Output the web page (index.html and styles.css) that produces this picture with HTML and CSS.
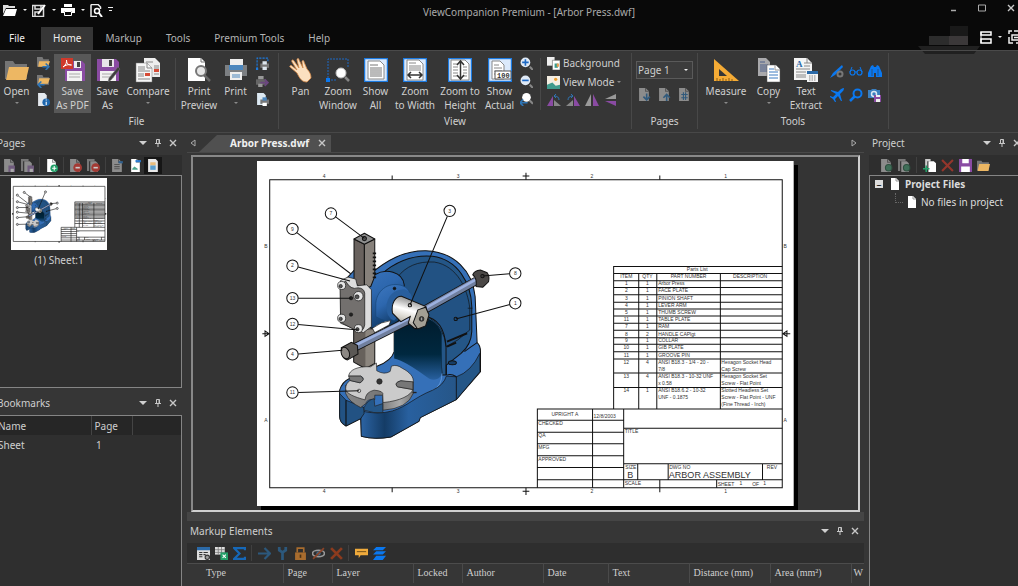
FILE: index.html
```html
<!DOCTYPE html>
<html lang="en">
<head>
    <meta charset="UTF-8">
    <meta name="viewport" content="width=device-width, initial-scale=1.0">
    <title>ViewCompanion Premium - [Arbor Press.dwf]</title>
    <link rel="stylesheet" href="styles.css">
</head>
<body>

<!-- Shared icons -->
<svg class="defs" aria-hidden="true">
    <symbol id="i-close" viewBox="0 0 8 8"><path d="M1 1l6 6M7 1L1 7" stroke="#c8c8c8" stroke-width="1.4"/></symbol>
    <symbol id="i-pin" viewBox="0 0 8 8"><path d="M2.5 .5h3v4h-3zM1 4.5h6M4 4.5V8M5 .5v4" stroke="#c8c8c8" fill="none"/></symbol>
    <symbol id="i-page" viewBox="0 0 12 12"><path d="M2 0h5l3 3v9H2z" fill="#fff"/><path d="M7 0v3h3" fill="none" stroke="#999"/></symbol>
    <symbol id="i-greypage" viewBox="0 0 12 12"><path d="M1 0h6l3 3v9H1z" fill="#8c8c8c"/><path d="M7 0v3h3" fill="none" stroke="#555"/></symbol>
    <symbol id="i-greypages" viewBox="0 0 12 12"><path d="M0 0h7v2H2v9H0z" fill="#777"/><path d="M3 2h5l2 2v8H3z" fill="#8c8c8c"/></symbol>
    <symbol id="i-folder" viewBox="0 0 24 24"><path d="M0 3h8l2 3h12v15H0z" fill="#757575"/><path d="M4 9h20l-3 13H1z" fill="#edb763"/></symbol>
    <symbol id="i-doc" viewBox="0 0 24 24"><path d="M0 0h24v24H0z" fill="#dceafb"/><path d="M.5 .5h23v23H.5z" fill="none" stroke="#1c7ae0" stroke-width="1.5"/></symbol>
    <symbol id="i-floppy" viewBox="0 0 24 24"><path d="M1 1h19l3 3v19H1z" fill="#8a4ba3"/><path d="M6 1h12v8H6z" fill="#e8e4ea"/><path d="M13 2h3v6h-3z" fill="#444"/><path d="M4 13h16v10H4z" fill="#f2f2f2"/><path d="M6 16h12M6 19h12" stroke="#aaa"/></symbol>
    <symbol id="i-printer" viewBox="0 0 24 24"><path d="M6 1h13v9H6z" fill="#eee"/><path d="M1 7h22v11H1z" fill="#7c7f82"/><path d="M5 7h14v5H5z" fill="#4b86bd"/><path d="M6 14h12v8H6z" fill="#eee"/><path d="M8 17h8M8 19h8" stroke="#4b86bd"/></symbol>
</svg>

<header class="titlebar">
    <div class="quick">
        <button aria-label="Open"><svg width="14" height="12" viewBox="0 0 14 12"><path d="M0 1h5l1 1h6v2H3L0 10z" fill="#ddd"/><path d="M3 5h11l-2 7H0z" fill="#fff"/></svg></button>
        <button class="caret white" aria-label="Open menu"></button>
        <button aria-label="Save as"><svg width="14" height="13" viewBox="0 0 14 13"><path d="M.5 1.5h11v11H.5zM3 1v4h6V1M3 12V8h5" fill="none" stroke="#ddd" stroke-width="1.5"/><path d="M13 1L6 10" stroke="#fff" stroke-width="2"/></svg></button>
        <button class="caret white" aria-label="Save menu"></button>
        <button aria-label="Print"><svg width="14" height="12" viewBox="0 0 14 12"><path d="M3 0h8v3H3zM0 4h14v5h-3V7H3v2H0z" fill="#fff"/><path d="M3.500 7.500h7v4h-7z" fill="none" stroke="#fff"/></svg></button>
        <button class="caret white" aria-label="Print menu"></button>
        <button aria-label="Print preview"><svg width="13" height="13" viewBox="0 0 13 13"><path d="M1 .5h7l2.500 2.500v2M1 .5v12h6" fill="none" stroke="#eee" stroke-width="1.500"/><circle cx="7" cy="7" r="2.500" fill="none" stroke="#fff" stroke-width="1.500"/><path d="M9 9l3 4" stroke="#fff" stroke-width="2"/></svg></button>
        <button class="caret white bar" aria-label="Customize"></button>
    </div>
    <h1>ViewCompanion Premium - [Arbor Press.dwf]</h1>
    <div class="window-buttons">
        <button aria-label="Minimize"><svg width="8" height="8"><path d="M2 6.500h5" stroke="#aaa" stroke-width="1.500"/></svg></button>
        <button aria-label="Maximize"><svg width="8" height="8"><path d="M.5 1h7v6h-7z" fill="none" stroke="#aaa"/></svg></button>
        <button aria-label="Close"><svg width="8" height="8"><use href="#i-close"/></svg></button>
    </div>
</header>

<nav class="tabs">
    <a href="#file" class="file">File</a>
    <a href="#home" class="active">Home</a>
    <a href="#markup">Markup</a>
    <a href="#tools">Tools</a>
    <a href="#premium">Premium Tools</a>
    <a href="#help">Help</a>
    <div class="account">
        <svg width="62" height="29" viewBox="0 0 62 29" aria-hidden="true"><path d="M32 0h18v10H32z" fill="#191919"/><path d="M11 10h20v9H11z" fill="#2c2c2c"/><path d="M31 10h19v9H31z" fill="#3b3839"/><path d="M0 20h62l-6 8H7z" fill="#202020"/></svg>
        <button aria-label="Layout"><svg width="12" height="13"><path d="M1 1h10v3H1zM1 8h10v4H1z" fill="none" stroke="#fff" stroke-width="1.500"/><path d="M1 1v11" stroke="#fff"/></svg></button>
        <button class="caret white" aria-label="Layout menu"></button>
        <button aria-label="Full screen"><svg width="13" height="14"><path d="M1 4V1h3M6 1h7M1 7v6h4M4 5h9v5H4zM6 7.500h6M8 13h5" fill="none" stroke="#eee" stroke-width="1.500"/></svg></button>
    </div>
</nav>

<section class="ribbon">
    <div class="group">
        <div class="tools">
            <button class="big-button w33"><svg><use href="#i-folder"/></svg><span>Open</span><i class="caret"></i></button>
            <div class="stack">
                <button aria-label="Import"><svg viewBox="0 0 12 12"><path d="M0 0h5l1 2h5v7H0z" fill="#777"/><path d="M2 4h10l-2 5H1z" fill="#edb763"/><path d="M5 9h6M8 6l3 3-3 3" fill="none" stroke="#2f75b5" stroke-width="1.500"/></svg></button>
                <button aria-label="Export"><svg viewBox="0 0 12 12"><path d="M0 0h5l1 2h5v7H0z" fill="#777"/><path d="M2 3h10l-2 5H1z" fill="#edb763"/><path d="M1 9h6M4 6L1 9l3 3" fill="none" stroke="#2f75b5" stroke-width="1.500"/></svg></button>
                <button aria-label="File info"><svg viewBox="0 0 12 12"><path d="M1 0h6l2 2v10H1z" fill="#e4e9ee"/><circle cx="8.500" cy="8.500" r="3.500" fill="#1e67ae"/><path d="M8.500 6v1M8.500 8v3" stroke="#fff"/></svg></button>
            </div>
            <button class="big-button w37 selected"><svg viewBox="0 0 24 24"><path d="M4 3h17l3 3v17H4z" fill="#8a4ba3"/><path d="M13 3h7v7h-7z" fill="#eee"/><path d="M16 4h3v5h-3z" fill="#444"/><path d="M6 13h15v10H6z" fill="#f2f2f2"/><path d="M8 16h11M8 19h11" stroke="#aaa"/><path d="M0 0h12v11H0z" fill="#d0392b"/><path d="M2 9c3-2 4-5 3.500-7 0 4 2 5 5 5-3-1-6 0-8.500 2z" fill="none" stroke="#fff"/></svg><span>Save<br>As PDF</span></button>
            <button class="big-button w33"><svg viewBox="0 0 24 24"><use href="#i-floppy"/><path d="M22 9L13 20l-1 4 3-2 9-11z" fill="#3f3f3f" stroke="#777" stroke-width=".5"/></svg><span>Save<br>As</span></button>
            <button class="big-button w48"><svg viewBox="0 0 24 24"><path d="M8 0h11l5 5v14H8z" fill="#eee"/><path d="M10 4h7M18 8h5M18 10h5M18 16h5" stroke="#888"/><path d="M18 11h5v3h-5z" fill="#d64b36"/><path d="M0 5h11l5 5v14H0z" fill="#f6f6f6" stroke="#777" stroke-width=".5"/><path d="M11 5v5h5" fill="none" stroke="#888"/><path d="M2 9h7M2 11h7M2 13h12M2 16h6M2 18h6M2 21h12" stroke="#888"/><path d="M9 15h5v3H9z" fill="#d64b36"/></svg><span>Compare</span><i class="caret"></i></button>
            <span class="divider"></span>
            <button class="big-button w40"><svg viewBox="0 0 24 24"><path d="M1 0h13l4 4v19H1z" fill="#fff"/><path d="M14 0v4h4" fill="none" stroke="#777"/><circle cx="14" cy="13" r="5" fill="#e6e6e6" stroke="#777" stroke-width="2"/><path d="M17 17l6 6" stroke="#666" stroke-width="2.500"/></svg><span>Print<br>Preview</span></button>
            <button class="big-button w33"><svg><use href="#i-printer"/></svg><span>Print</span><i class="caret"></i></button>
            <div class="stack">
                <button aria-label="Print window"><svg viewBox="0 0 12 12"><path d="M1 11V1h10v3" fill="none" stroke="#1c7ae0" stroke-dasharray="2 1"/><path d="M0 10h2v2H0z" fill="#1c7ae0"/><path d="M4 6h8v4H4z" fill="#777"/><path d="M6 4h4v3H6zM6 9h4v3H6z" fill="#dde6ee"/></svg></button>
                <button aria-label="Batch print"><svg viewBox="0 0 12 12"><path d="M0 4h9v5H0z" fill="#666"/><path d="M2 1h5v3H2zM2 8h4v3H2z" fill="#999"/><path d="M4 7h7M8 4l3 3-3 3" fill="none" stroke="#6b4680" stroke-width="1.500"/></svg></button>
                <button aria-label="Print page"><svg viewBox="0 0 12 12"><path d="M1 0h6l2 2v9H1z" fill="#dce9f2"/><path d="M4 6h8v4H4z" fill="#777"/><path d="M6 4h4v3H6z" fill="#4b86bd"/><path d="M6 9h4v3H6z" fill="#fff"/></svg></button>
            </div>
        </div>
        <h2>File</h2>
    </div>

    <div class="group">
        <div class="tools">
            <button class="big-button w35"><svg viewBox="0 0 24 24"><path d="M8 15L1 9c-1-1 1-2 2-1l5 4L3 4c-1-2 1-3 2-1l5 7L8 2c0-2 2-2 2 0l4 8-1-6c0-2 2-2 2 0l3 7c3 3 4 6 4 9l-4 4c-5 0-7-3-10-9z" fill="#fbe0c0" stroke="#d88a48" stroke-width=".8"/></svg><span>Pan</span></button>
            <button class="big-button w40"><svg viewBox="0 0 24 24"><path d="M2 20V1h20v9M2 22h8" fill="none" stroke="#1c68c4" stroke-dasharray="2 1"/><path d="M0 20h4v4H0z" fill="#0a78f0"/><circle cx="15" cy="15" r="5" fill="#fff" stroke="#bbb"/><path d="M19 19l4 4" stroke="#888" stroke-width="2.500"/></svg><span>Zoom<br>Window</span></button>
            <button class="big-button w35"><svg viewBox="0 0 24 24"><use href="#i-doc"/><path d="M4 3h12l4 4v14H4z" fill="#fff" stroke="#888"/><path d="M6 7h8M6 10h12M6 12h12M6 14h12M6 16h12M6 18h12" stroke="#777"/></svg><span>Show<br>All</span></button>
            <button class="big-button w44"><svg viewBox="0 0 24 24"><use href="#i-doc"/><path d="M4 2h12l4 4v16H4z" fill="#fff" stroke="#888"/><path d="M6 5h7M6 8h12M6 10h12M6 12h12" stroke="#888"/><path d="M5 17h14M8 14l-3 3 3 3M16 14l3 3-3 3" fill="none" stroke="#333" stroke-width="1.500"/></svg><span>Zoom<br>to Width</span></button>
            <button class="big-button w46"><svg viewBox="0 0 24 24"><use href="#i-doc"/><path d="M3 2h14l4 4v16H3z" fill="#fff" stroke="#888"/><path d="M5 6h5M5 9h5M5 12h5M5 15h5M5 18h5M15 9h4M15 12h4M15 15h4M15 18h4" stroke="#888"/><path d="M12.500 4v16M9 7l3.500-4 3.500 4M9 17l3.500 4 3.500-4" fill="none" stroke="#333" stroke-width="1.500"/></svg><span>Zoom to<br>Height</span></button>
            <button class="big-button w33"><svg viewBox="0 0 24 24"><use href="#i-doc"/><path d="M4 3h8l4 4v14H4z" fill="#fff" stroke="#888"/><path d="M6 7h5M6 10h8M6 13h8M6 16h8" stroke="#888"/><path d="M7 13h16v8H7z" fill="#fff" stroke="#555"/><text x="9" y="20" font-size="7" font-weight="bold" fill="#333" font-family="Liberation Mono, monospace">100</text></svg><span>Show<br>Actual</span></button>
            <div class="stack">
                <button aria-label="Zoom in"><svg viewBox="0 0 12 12"><circle cx="5" cy="5" r="4.500" fill="#dfe9f5"/><path d="M5 2v6M2 5h6" stroke="#1c68c4" stroke-width="1.500"/><path d="M9 9l3 3" stroke="#888" stroke-width="2"/></svg></button>
                <button aria-label="Zoom out"><svg viewBox="0 0 12 12"><circle cx="5" cy="5" r="4.500" fill="#dfe9f5"/><path d="M2 5h6" stroke="#1c68c4" stroke-width="1.500"/><path d="M9 9l3 3" stroke="#888" stroke-width="2"/></svg></button>
                <button aria-label="Previous zoom"><svg viewBox="0 0 12 12"><circle cx="6" cy="4" r="4" fill="#fff"/><path d="M9 7l3 3" stroke="#888" stroke-width="2"/><path d="M0 9h7M3 6L0 9l3 3" fill="none" stroke="#2f75b5" stroke-width="1.500"/></svg></button>
            </div>
            <span class="divider"></span>
            <div class="modes">
                <button><svg viewBox="0 0 12 12"><path d="M0 0h7v8H0z" fill="#eee"/><path d="M5 3h7v9H5z" fill="#fff" stroke="#555" stroke-width=".5"/><path d="M7 6h3v4H7z" fill="#3a9c90"/><path d="M9 6h2v3H9z" fill="#e89b4c"/></svg>Background</button>
                <button><svg viewBox="0 0 12 12"><path d="M0 0h12v12H0z" fill="#f4eee2"/><path d="M0 8l5-2 3 3 4-1v4H0z" fill="#3f9a8c"/><circle cx="8" cy="3" r="1.500" fill="#f0a030"/></svg>View Mode<i class="caret"></i></button>
                <div class="flips">
                    <button aria-label="Rotate left"><svg viewBox="0 0 14 12"><path d="M6 2v10H0z" fill="#8a4ba3"/><path d="M7 6l7 6H7z" fill="#888"/><path d="M12 6q0-4-5-4M9 0L7 2l2 2" fill="none" stroke="#2f75b5"/></svg></button>
                    <button aria-label="Rotate right"><svg viewBox="0 0 14 12"><path d="M7 6v6H0z" fill="#888"/><path d="M8 2l6 10H8z" fill="#8a4ba3"/><path d="M2 6q0-4 5-4M5 0l2 2-2 2" fill="none" stroke="#2f75b5"/></svg></button>
                    <button aria-label="Flip horizontal"><svg viewBox="0 0 14 12"><path d="M6 0v12H0z" fill="#999"/><path d="M8 0l6 12H8z" fill="#8a4ba3"/></svg></button>
                    <button aria-label="Flip vertical"><svg viewBox="0 0 14 12"><path d="M12 0v5H1z" fill="#999"/><path d="M1 7h11v5z" fill="#8a4ba3"/></svg></button>
                </div>
            </div>
        </div>
        <h2>View</h2>
    </div>

    <div class="group">
        <div class="tools pages-tools">
            <label class="select-box"><select aria-label="Page"><option>Page 1</option></select><i class="caret white"></i></label>
            <div class="page-buttons">
                <button aria-label="Next page"><svg viewBox="0 0 12 12"><use href="#i-greypage"/><path d="M8 5v6M5 8l3 3 3-3" fill="none" stroke="#315a7c" stroke-width="1.500"/></svg></button>
                <button aria-label="Previous page"><svg viewBox="0 0 12 12"><use href="#i-greypage"/><path d="M8 12V6M5 9l3-3 3 3" fill="none" stroke="#315a7c" stroke-width="1.500"/></svg></button>
                <button aria-label="Go to page"><svg viewBox="0 0 12 12"><use href="#i-greypage"/><path d="M3 6h6M3 9h6M5 4v7M7 4v7" stroke="#315a7c"/></svg></button>
            </div>
        </div>
        <h2>Pages</h2>
    </div>

    <div class="group">
        <div class="tools">
            <button class="big-button w48"><svg viewBox="0 0 24 24"><path d="M0 1l25 22H0z" fill="#f5ab35"/><path d="M5 11l8 7H5z" fill="#363636"/><path d="M3 20v3M6 21v2M9 20v3M12 21v2M15 20v3M18 21v2" stroke="#8a5c14"/></svg><span>Measure</span><i class="caret"></i></button>
            <button class="big-button w37"><svg viewBox="0 0 24 24"><path d="M1 0h8l4 4v14H1z" fill="#a9a9ac"/><path d="M3 4h5M3 7h8M3 9h8M3 11h8M3 13h8" stroke="#4c5f88"/><path d="M10 7h9l4 4v13H10z" fill="#fff" stroke="#555" stroke-width=".5"/><path d="M18 7v5h5" fill="none" stroke="#999"/><path d="M12 11h5M12 14h9M12 17h9M12 20h9" stroke="#3d7bc0"/></svg><span>Copy</span><i class="caret"></i></button>
            <button class="big-button w38"><svg viewBox="0 0 24 24"><path d="M0 0h13l5 5v17H0z" fill="#f4f4f4"/><path d="M13 0v5h5" fill="none" stroke="#888"/><path d="M10 5h3M10 8h6M2 11h14M2 14h10M2 17h10M2 19h10" stroke="#888"/><text x="2" y="9" font-size="9" font-weight="bold" fill="#2b6aa8" font-family="Liberation Serif, serif">A</text><path d="M13 13h11v11H13z" fill="#f4f4f4"/><path d="M13 13h11v3H13z" fill="#2b6aa8"/><path d="M15 18h7M15 20h7M15 22h7" stroke="#888" stroke-dasharray="1.500 1"/></svg><span>Text<br>Extract</span></button>
            <div class="icon-grid">
                <button aria-label="Edit settings"><svg viewBox="0 0 14 14"><path d="M12 1L3 9l-3 5 5-3 8-8z" fill="#0a78f0"/><circle cx="10" cy="10" r="2.500" fill="none" stroke="#777" stroke-width="2"/></svg></button>
                <button aria-label="Glasses"><svg viewBox="0 0 14 14"><circle cx="3.500" cy="8.500" r="2.500" fill="none" stroke="#0a78f0" stroke-width="1.200"/><circle cx="10.500" cy="8.500" r="2.500" fill="none" stroke="#0a78f0" stroke-width="1.200"/><path d="M1 8l2-5M13 8l-2-5M6 8h2" stroke="#0a78f0"/></svg></button>
                <button aria-label="Find"><svg viewBox="0 0 14 14"><path d="M3 2l2-1 1 2h2l1-2 2 1 3 7v4H8V9H6v4H0V9z" fill="#0a78f0"/><path d="M4 5v7M10 5v7" stroke="#363636" stroke-width=".6"/></svg></button>
                <button aria-label="Fly to"><svg viewBox="0 0 14 14"><path d="M14 0c-2 0-3 1-4 2L8 4 1 2v1l5 3-3 3-3-1v1l3 2 2 3h1l-1-3 3-3 3 5h1l-2-7 2-2c1-1 2-2 2-4z" fill="#0a78f0"/></svg></button>
                <button aria-label="Magnifier"><svg viewBox="0 0 14 14"><circle cx="8.500" cy="5.500" r="4" fill="none" stroke="#0a78f0" stroke-width="2"/><path d="M5.500 8.500L1 13" stroke="#0a78f0" stroke-width="2.500"/></svg></button>
                <button aria-label="Snapshot"><svg viewBox="0 0 14 14"><path d="M0 2h3l1-1h4l1 1h3v8H0z" fill="#3a7fc0"/><circle cx="6" cy="6" r="2.500" fill="none" stroke="#dce8f3" stroke-width="1.500"/><path d="M6 7h7v7H6z" fill="#8a4ba3"/><path d="M8 7h4v2H8zM8 11h4v3H8z" fill="#eee"/></svg></button>
            </div>
        </div>
        <h2>Tools</h2>
    </div>
</section>

<main>
    <aside class="left-dock">
        <section class="dock-panel pages">
            <header class="panel-title"><h3>Pages</h3><button class="caret menu" aria-label="Menu"></button><button aria-label="Pin"><svg><use href="#i-pin"/></svg></button><button aria-label="Close"><svg><use href="#i-close"/></svg></button></header>
            <div class="toolbar">
                <button aria-label="Save page"><svg viewBox="0 0 12 12"><use href="#i-greypage"/><path d="M5 6h6v6H5z" fill="#6f5b7c"/><path d="M7 9h3v3H7z" fill="#aaa"/></svg></button>
                <button aria-label="Save pages"><svg viewBox="0 0 12 12"><use href="#i-greypages"/><path d="M6 6h6v6H6z" fill="#6f5b7c"/><path d="M8 9h3v3H8z" fill="#aaa"/></svg></button>
                <i></i>
                <button aria-label="Add page"><svg viewBox="0 0 12 12"><use href="#i-page"/><circle cx="8.500" cy="8.500" r="3.500" fill="#23a069"/><path d="M8.500 6.500v4M6.500 8.500h4" stroke="#fff"/></svg></button>
                <i></i>
                <button aria-label="Remove page"><svg viewBox="0 0 12 12"><use href="#i-greypage"/><circle cx="8" cy="8" r="4" fill="#a33a34"/><path d="M6 8h4" stroke="#ccc" stroke-width="1.500"/></svg></button>
                <button aria-label="Remove pages"><svg viewBox="0 0 12 12"><use href="#i-greypages"/><circle cx="8" cy="8" r="4" fill="#a33a34"/><path d="M6 8h4" stroke="#ccc" stroke-width="1.500"/></svg></button>
                <i></i>
                <button aria-label="Import page"><svg viewBox="0 0 12 12"><use href="#i-greypage"/><path d="M3 5h5M3 7h5M3 9h5" stroke="#555"/><path d="M7 3h4" stroke="#2f5e8c" stroke-width="2"/></svg></button>
                <button aria-label="Export page"><svg viewBox="0 0 12 12"><use href="#i-page"/><path d="M3 9l2-2 3 2v1H3z" fill="#4ba38e"/><path d="M6 2h5" stroke="#2a7bd0" stroke-width="2"/></svg></button>
                <button class="on" aria-label="Thumbnails"><svg viewBox="0 0 12 12"><path d="M1 0h7l2 2v10H1z" fill="#e8e8e8"/><path d="M3 3h5v3H3z" fill="#e9bd7c"/><path d="M3 6h5v4H3z" fill="#5a9fd0"/></svg></button>
            </div>
            <div class="panel-body thumbs">
                <figure>
                    <div class="thumb"><svg viewBox="0 5 1604 1034" aria-hidden="true"><use href="#drawing"/></svg></div>
                    <figcaption>(1) Sheet:1</figcaption>
                </figure>
            </div>
        </section>
        <section class="dock-panel bookmarks">
            <header class="panel-title"><h3>Bookmarks</h3><button class="caret menu" aria-label="Menu"></button><button aria-label="Pin"><svg><use href="#i-pin"/></svg></button><button aria-label="Close"><svg><use href="#i-close"/></svg></button></header>
            <div class="panel-body">
                <table class="bookmark-table">
                    <thead><tr><th>Name</th><th>Page</th><th></th></tr></thead>
                    <tbody><tr><td>Sheet</td><td>1</td><td></td></tr></tbody>
                </table>
            </div>
        </section>
    </aside>

    <div class="center">
        <div class="doc-tabs">
            <button class="scroll" aria-label="Scroll left"><svg width="6" height="8"><path d="M5 1v6L1 4z" fill="none" stroke="#aaa"/></svg></button>
            <div class="doc-tab"><span>Arbor Press.dwf</span><button aria-label="Close document"><svg><use href="#i-close"/></svg></button></div>
            <button class="scroll right" aria-label="Scroll right"><svg width="6" height="8"><path d="M1 1v6l4-3z" fill="none" stroke="#aaa"/></svg></button>
        </div>
        <div class="canvas">
            <svg class="sheet" viewBox="0 5 1604 1034" role="img" aria-label="Arbor press assembly">
                <defs>
                    <linearGradient id="g-hollow" x1="0" y1="0" x2="0" y2="1"><stop offset="0" stop-color="#001b2c"/><stop offset=".6" stop-color="#00283f"/><stop offset="1" stop-color="#28609f"/></linearGradient>
                    <linearGradient id="g-front"><stop offset="0" stop-color="#2c64a4"/><stop offset=".25" stop-color="#143c66"/><stop offset=".5" stop-color="#28609f"/><stop offset="1" stop-color="#265688"/></linearGradient>
                    <linearGradient id="g-boss" x1="0" y1="0" x2=".6" y2="1"><stop offset="0" stop-color="#3d77bf"/><stop offset=".5" stop-color="#2d67ae"/><stop offset="1" stop-color="#123c6a"/></linearGradient>
                    <linearGradient id="g-steel" x1=".3" y1="0" x2="0" y2="1"><stop offset="0" stop-color="#8c8c8c"/><stop offset=".35" stop-color="#fff"/><stop offset=".6" stop-color="#d5d2ca"/><stop offset="1" stop-color="#6f6c66"/></linearGradient>
                    <linearGradient id="g-rim"><stop offset="0" stop-color="#888"/><stop offset=".5" stop-color="#777"/><stop offset=".8" stop-color="#aaa"/><stop offset="1" stop-color="#777"/></linearGradient>
                </defs>
                <g id="drawing">
                    <path d="M0 5h1604v1034H0z" fill="#fff"/>
                    <g class="ink">
                        <path d="M38 61h1532v921H38z"/>
                        <path d="M404 48v13M1204 48v13M404 982v13M1204 982v13M804 40v21M794 50h20M804 982v21M794 992h20M16 521h22M24 513v16l12-8zM1570 521h24M1584 513v16l-12-8z"/>
                    </g>
                    <g class="sheet-text centered">
                        <text x="201" y="55">4</text><text x="601" y="55">3</text><text x="1001" y="55">2</text><text x="1401" y="55">1</text>
                        <text x="201" y="998">4</text><text x="601" y="998">3</text><text x="1001" y="998">2</text><text x="1401" y="998">1</text>
                        <text x="27" y="265">B</text><text x="27" y="784">A</text><text x="1579" y="265">B</text><text x="1579" y="784">A</text>
                    </g>

                    <!-- Press: frame and base -->
                    <g stroke="#111" stroke-width="3" stroke-linejoin="round">
                        <path fill="#3570b8" d="M335 345C390 300 440 272 505 273C590 276 645 335 652 410L658 548Q668 556 668 575V635L596 718L488 772L484 783L400 830Q350 838 312 828L310 775L266 797Q247 787 247 768V690Q255 665 275 656L360 618Q402 602 410 575V500L340 505Z"/>
                        <path fill="#245687" d="M372 343C420 302 470 285 525 290C600 300 640 370 642 440V515Q640 555 610 580L566 615V645H553L545 520L420 480Z"/>
                        <path fill="#225283" d="M420 352C445 320 480 304 530 307C600 318 630 390 636 445V510L600 540L565 560Q560 500 510 470L440 430Z" stroke-width="2"/>
                        <path fill="url(#g-hollow)" stroke="none" d="M410 495L470 468Q535 470 552 520V644Q540 665 515 656Q440 600 410 595Z"/>
                        <path fill="none" d="M500 468Q560 478 565 560V645"/>
                        <path fill="none" stroke="#5a92d5" d="M553 640Q552 680 525 690"/>
                        <path fill="url(#g-front)" d="M310 752Q360 764 405 752C450 738 470 712 525 690Q558 675 566 648L596 650V718L488 772L484 783L400 830Q350 838 312 828Z" stroke-width="2"/>
                        <path fill="#245687" d="M596 650Q640 635 666 580V635L596 718Z" stroke-width="2"/>
                        <path fill="none" d="M568 645Q580 640 596 650M658 548Q640 560 620 575"/>
                        <path fill="#225283" d="M247 700V768Q247 787 266 797V720ZM266 720L320 742V760L310 775L266 797Z" stroke-width="2"/>
                        <ellipse cx="584" cy="608" rx="12" ry="6" fill="#163d66"/>
                        <path d="M568 545L628 520M568 560L595 548" stroke-width="6"/>
                        <path d="M630 445h14" stroke-width="2"/>
                    </g>
                    <!-- Press: rack column -->
                    <g stroke="#111" stroke-width="3" stroke-linejoin="round">
                        <path fill="#67615c" d="M289 480H352V610L325 626L289 606Z"/><path fill="#8c867f" stroke="none" d="M324 510H350V609L324 623Z"/>
                        <path fill="url(#g-boss)" d="M268 356L290 332L352 345C385 325 435 335 440 375V470L400 500L340 505L320 390Z"/>
                        <path fill="#69625e" d="M290 238L321 253V388L290 370Z"/>
                        <path fill="#87817b" d="M321 253L352 238V350L340 380L321 388Z"/>
                        <path fill="#8e8e8e" d="M290 238L321 221L352 238L321 254Z"/>
                        <path d="M346 281h10M346 293h10M346 305h10M346 317h10M346 329h10M346 341h10M346 353h10" stroke-width="5"/>
                        <circle cx="321" cy="237" r="6" fill="#555"/>
                    </g>
                    <!-- Press: boss, face plate and screws -->
                    <g stroke="#111" stroke-width="2" stroke-linejoin="round">
                        <path fill="url(#g-boss)" stroke="#174678" d="M355 430C360 385 400 365 435 378C458 385 462 410 455 430L420 480Q385 490 355 470Z"/>
                        <path fill="#285e9d" stroke="none" d="M387 435Q395 390 440 388Q465 395 464 425L410 482Q385 475 387 435Z"/>
                        <path fill="#dcdcdc" d="M250 362L272 352L295 358L300 378L328 375L342 390V500L318 518L250 490Z"/>
                        <path fill="#73706e" d="M248 375L265 364Q280 392 302 384Q320 385 322 400V495Q318 518 298 513L250 487Z"/>
                        <g fill="#e5e5e5"><circle cx="253" cy="377" r="12"/><circle cx="303" cy="409" r="14"/><circle cx="253" cy="475" r="12"/><circle cx="303" cy="506" r="12"/></g>
                        <g fill="#555"><circle cx="250" cy="379" r="5"/><circle cx="299" cy="411" r="6"/><circle cx="250" cy="477" r="5"/><circle cx="300" cy="508" r="5"/></g>
                        <circle cx="281" cy="415" r="5" fill="#222"/><circle cx="281" cy="464" r="5" fill="#222"/><circle cx="411" cy="386" r="4" fill="#111"/>
                        <path fill="#fff" d="M345 505Q370 485 400 482L395 495L352 518Z"/>
                    </g>
                    <!-- Press: lever, shaft and handle caps -->
                    <g stroke="#111" stroke-linecap="butt">
                        <path d="M500 450L655 363M290 563L460 478" stroke-width="25"/>
                        <path d="M500 450L655 363M290 563L460 478" stroke="#707f9e" stroke-width="20"/>
                        <path d="M500 447L655 359M290 558L460 473" stroke="#9cb1e0" stroke-width="8"/>
                        <path fill="url(#g-steel)" stroke-width="3" d="M405 460C400 430 415 408 432 409L505 440L512 480L490 505L472 506L452 490L458 470L430 485Z"/>
                        <path fill="#a39f94" stroke-width="3" d="M481 450L504 442L514 465L504 498L480 507L467 488Z"/>
                        <circle cx="492" cy="477" r="7" fill="#444" stroke-width="2"/><path d="M492 473v8" stroke="#ddd" stroke-width="2"/>
                        <path fill="#4b4846" stroke-width="3" d="M645 345Q650 332 668 331L688 339Q696 350 692 366L675 382L655 380Q658 355 645 345Z"/>
                        <path fill="#5b5855" stroke-width="3" d="M252 563L282 547L300 556L302 582L270 600Q250 592 252 563Z"/>
                        <ellipse cx="264" cy="579" rx="12" ry="18" fill="#8c8884" stroke-width="3" transform="rotate(-20 264 579)"/>
                    </g>
                    <!-- Press: table plate -->
                    <g stroke="#222" stroke-width="2" stroke-linejoin="round">
                        <path fill="url(#g-rim)" d="M265 675V700Q275 725 310 742L325 730Q330 715 352 718V705H376V750Q450 745 467 700V665Z"/>
                        <path fill="#cbcbcb" d="M265 685Q265 670 278 661L308 668Q326 655 310 648L274 648C275 630 300 618 340 620L357 609L358 632Q380 645 398 634L402 618Q418 612 435 625C455 635 470 650 467 667L430 662Q408 668 420 680L466 688C460 705 430 722 377 727L376 705Q380 692 350 690Q325 695 323 719C290 710 265 700 265 685Z"/>
                        <path fill="#777" d="M274 648L310 648Q326 658 308 668L278 661ZM466 665L430 662Q408 668 420 680L466 688Z"/>
                        <path fill="#245687" d="M320 742Q330 720 350 715L352 738L376 730V757Q350 760 320 750Z"/>
                        <circle cx="366" cy="664" r="8" fill="#333"/><circle cx="305" cy="692" r="5" fill="#ddd"/><path d="M465 697h12" stroke-width="4"/>
                    </g>

                    <!-- Balloons -->
                    <g class="ink">
                        <path d="M235 172L321 236M119 219L280 342M123 322L278 364M123 415H280M123 494L303 510M123 582L255 571M123 697L305 692M569 170L457 436M755 342L674 349M756 434L594 477"/>
                        <g fill="#fff"><circle cx="221" cy="162" r="17"/><circle cx="106" cy="208" r="17"/><circle cx="106" cy="318" r="17"/><circle cx="106" cy="415" r="17"/><circle cx="106" cy="492" r="17"/><circle cx="106" cy="583" r="17"/><circle cx="106" cy="697" r="17"/><circle cx="576" cy="154" r="17"/><circle cx="772" cy="341" r="17"/><circle cx="772" cy="430" r="17"/></g>
                        <g fill="none"><circle cx="457" cy="436" r="5"/><circle cx="594" cy="477" r="5"/><circle cx="674" cy="349" r="5"/></g>
                    </g>
                    <g class="sheet-text centered">
                        <text x="221" y="167">7</text><text x="106" y="213">9</text><text x="106" y="323">2</text><text x="106" y="420">13</text><text x="106" y="497">12</text><text x="106" y="588">4</text><text x="106" y="702">11</text><text x="576" y="159">3</text><text x="772" y="346">8</text><text x="772" y="435">1</text>
                    </g>

                    <!-- Parts list -->
                    <path class="ink" d="M1066 746V320H1570M1066 341h504M1066 363h504M1066 383h504M1066 405h504M1066 427h504M1066 447h504M1066 468h504M1066 490h504M1066 511h504M1066 533h504M1066 553h504M1066 575h504M1066 597h504M1066 639h504M1066 682h504M1141 341v405M1195 341v405M1385 341v405"/>
                    <g class="sheet-text centered">
                        <text x="1316" y="334">Parts List</text>
                        <text x="1104" y="356">ITEM</text><text x="1167" y="356">QTY</text><text x="1290" y="356">PART NUMBER</text><text x="1474" y="356">DESCRIPTION</text>
                        <text x="1104" y="376">1</text><text x="1167" y="376">1</text><text x="1104" y="398">2</text><text x="1167" y="398">1</text>
                        <text x="1104" y="420">3</text><text x="1167" y="420">1</text><text x="1104" y="442">4</text><text x="1167" y="442">1</text>
                        <text x="1104" y="462">5</text><text x="1167" y="462">1</text><text x="1104" y="483">11</text><text x="1167" y="483">1</text>
                        <text x="1104" y="505">7</text><text x="1167" y="505">1</text><text x="1104" y="527">8</text><text x="1167" y="527">2</text>
                        <text x="1104" y="547">9</text><text x="1167" y="547">1</text><text x="1104" y="568">10</text><text x="1167" y="568">1</text>
                        <text x="1104" y="590">11</text><text x="1167" y="590">1</text><text x="1104" y="611">12</text><text x="1167" y="611">4</text>
                        <text x="1104" y="653">13</text><text x="1167" y="653">4</text><text x="1104" y="696">14</text><text x="1167" y="696">1</text>
                    </g>
                    <g class="sheet-text">
                        <text x="1199" y="376">Arbor Press</text><text x="1199" y="398">FACE PLATE</text><text x="1199" y="420">PINION SHAFT</text><text x="1199" y="442">LEVER ARM</text>
                        <text x="1199" y="462">THUMB SCREW</text><text x="1199" y="483">TABLE PLATE</text><text x="1199" y="505">RAM</text><text x="1199" y="527">HANDLE CAPlgt</text>
                        <text x="1199" y="547">COLLAR</text><text x="1199" y="568">GIB PLATE</text><text x="1199" y="590">GROOVE PIN</text>
                        <text x="1199" y="611">ANSI B18.3 - 1/4 - 20 -</text><text x="1199" y="632">7/8</text><text x="1199" y="653">ANSI B18.3 - 10-32 UNF</text><text x="1199" y="675">x 0.58</text>
                        <text x="1199" y="696">ANSI B18.6.2 - 10-32</text><text x="1199" y="716">UNF - 0.1875</text>
                        <text x="1388" y="611">Hexagon Socket Head</text><text x="1388" y="632">Cap Screw</text><text x="1388" y="653">Hexagon Socket Set</text><text x="1388" y="675">Screw - Flat Point</text>
                        <text x="1388" y="696">Slotted Headless Set</text><text x="1388" y="716">Screw - Flat Point - UNF</text><text x="1388" y="738">(Fine Thread - Inch)</text>
                    </g>
                    <!-- Title block -->
                    <path class="ink" d="M838 982V746H1570M1003 746v236M1096 746v236M838 780h258M838 816h258M838 850h258M838 886h258M838 921h258M838 958h732M1096 804h474M1096 910h474M1138 910v48M1229 910v48M1511 910v48M1204 958v24M1374 958v24"/>
                    <g class="sheet-text">
                        <text x="880" y="768">UPRIGHT A</text><text x="1006" y="774">12/8/2003</text><text x="841" y="794">CHECKED</text><text x="841" y="831">QA</text><text x="841" y="865">MFG</text><text x="841" y="901">APPROVED</text>
                        <text x="1099" y="819">TITLE</text><text x="1101" y="925">SIZE</text><text x="1232" y="925">DWG NO</text><text x="1524" y="925">REV</text><text x="1099" y="972">SCALE</text><text x="1377" y="976">SHEET</text><text x="1442" y="973">1</text><text x="1480" y="976">OF</text><text x="1513" y="973">1</text>
                        <text class="big" x="1107" y="953">B</text><text class="big" x="1231" y="954">ARBOR ASSEMBLY</text>
                    </g>
                </g>
            </svg>
        </div>
        <section class="elements">
            <header class="panel-title"><h3>Markup Elements</h3><button class="caret menu" aria-label="Menu"></button><button aria-label="Pin"><svg><use href="#i-pin"/></svg></button><button aria-label="Close"><svg><use href="#i-close"/></svg></button></header>
            <div class="toolbar">
                <button aria-label="Properties"><svg viewBox="0 0 12 12"><path d="M0 0h12v12H0z" fill="#ddd"/><path d="M0 0h12v3H0z" fill="#2b6aa8"/><path d="M2 5h3M2 7h3M2 9h3M6 5h4M6 7h2" stroke="#333"/><circle cx="9.500" cy="9.500" r="2" fill="#999" stroke="#333"/></svg></button>
                <button aria-label="Export to Excel"><svg viewBox="0 0 12 12"><path d="M0 0h9v7H0z" fill="#ddd"/><path d="M3 0v7M6 0v7M0 2.500h9M0 5h9" stroke="#777" stroke-width=".7"/><path d="M5 5h7v7H5z" fill="#23a069"/><path d="M7 7l3 3M10 7l-3 3" stroke="#fff"/></svg></button>
                <button aria-label="Sum"><svg viewBox="0 0 12 12"><path d="M11 3V1H1l5 5-5 5h10V9" fill="none" stroke="#1668b8" stroke-width="2"/></svg></button>
                <i></i>
                <button aria-label="Go to"><svg viewBox="0 0 12 12"><path d="M0 6h11M6 1l5 5-5 5" fill="none" stroke="#2c587c" stroke-width="2"/></svg></button>
                <button aria-label="Settings"><svg viewBox="0 0 12 12"><path d="M3 0v3l3 2 3-2V0M6 5v7" fill="none" stroke="#2c587c" stroke-width="2.500"/></svg></button>
                <button aria-label="Lock"><svg viewBox="0 0 12 12"><path d="M1 5h10v7H1z" fill="#a86c2e"/><path d="M3 5V1h6v4" fill="none" stroke="#a86c2e" stroke-width="1.500"/><path d="M6 7v3" stroke="#4a3216" stroke-width="1.500"/></svg></button>
                <button aria-label="Hide"><svg viewBox="0 0 12 12"><ellipse cx="6" cy="6" rx="5.500" ry="3" fill="none" stroke="#999" stroke-width="1.500"/><circle cx="6" cy="6" r="2" fill="#456c8c"/><path d="M1 11L11 1" stroke="#8c4428" stroke-width="1.500"/></svg></button>
                <button aria-label="Delete"><svg viewBox="0 0 12 12"><path d="M1 1l10 10M11 1L1 11" stroke="#8c3b1e" stroke-width="2.500"/></svg></button>
                <i></i>
                <button aria-label="Comment"><svg viewBox="0 0 14 12"><path d="M0 1h14v7H6l-2 3V8H0z" fill="#f0ab3c"/><path d="M2 4h10" stroke="#6b4b18"/></svg></button>
                <button aria-label="Layers"><svg viewBox="0 0 12 12"><path d="M3 0h9L9 3H0zM3 4h9L9 7H0zM3 8h9l-3 4H0z" fill="#0a78f0"/></svg></button>
            </div>
            <table class="element-table">
                <thead><tr><th class="c96">Type</th><th class="c49">Page</th><th class="c81">Layer</th><th class="c49">Locked</th><th class="c81">Author</th><th class="c65">Date</th><th class="c81">Text</th><th class="c81">Distance (mm)</th><th class="c81">Area (mm²)</th><th>W</th></tr></thead>
            </table>
        </section>
    </div>

    <aside class="right-dock">
        <header class="panel-title"><h3>Project</h3><button class="caret menu" aria-label="Menu"></button><button aria-label="Pin"><svg><use href="#i-pin"/></svg></button><button aria-label="Close"><svg><use href="#i-close"/></svg></button></header>
        <div class="toolbar">
            <button aria-label="Open project file"><svg viewBox="0 0 12 12"><use href="#i-greypage"/><circle cx="8" cy="8" r="3" fill="#3f6e58" stroke="#2f5040"/></svg></button>
            <button aria-label="Reload"><svg viewBox="0 0 12 12"><use href="#i-greypages"/><circle cx="8" cy="8" r="3" fill="#3f6e58" stroke="#2f5040"/></svg></button>
            <i></i>
            <button aria-label="Add file"><svg viewBox="0 0 12 12"><path d="M2 0h5v2H4v6H2z" fill="#ccc"/><path d="M5 2h5l2 2v8H5z" fill="#fff"/><path d="M3 6v6M0 9h6" stroke="#23a069" stroke-width="1.500"/></svg></button>
            <button aria-label="Remove file"><svg viewBox="0 0 12 12"><path d="M1 1l10 10M11 1L1 11" stroke="#94362c" stroke-width="2"/></svg></button>
            <button aria-label="Save project"><svg viewBox="0 0 12 12"><path d="M0 0h12v12H0z" fill="#8a4ba3"/><path d="M3 0h6v4H3zM2 7h8v5H2z" fill="#fff"/></svg></button>
            <button aria-label="Open project"><svg><use href="#i-folder"/></svg></button>
        </div>
        <ul class="tree">
            <li><button class="toggle" aria-label="Collapse">–</button><svg><use href="#i-page"/></svg><b>Project Files</b>
                <ul><li><svg><use href="#i-page"/></svg>No files in project</li></ul>
            </li>
        </ul>
    </aside>
</main>

</body>
</html>
```
FILE: styles.css
```css
* {
    box-sizing: border-box;
}

body {
    margin: 0;
    height: 100vh;
    display: flex;
    flex-direction: column;
    overflow: hidden;
    background-color: #363636;
    color: #cfcfcf;
    font-family: "Noto Sans", "Open Sans", sans-serif;
    font-size: 10px;
    line-height: 14px;
    white-space: nowrap;
}

h1, h2, h3, ul, figure {
    margin: 0;
    padding: 0;
    font-size: 10px;
    font-weight: normal;
    list-style: none;
}

button {
    display: flex;
    align-items: center;
    justify-content: center;
    flex: none;
    padding: 0;
    border: 0;
    background: none;
    color: inherit;
    font: inherit;
    cursor: pointer;
}

svg {
    display: block;
    flex: none;
}

.defs {
    position: absolute;
    width: 0;
    height: 0;
}

/* small down arrow */
.caret::after {
    content: "";
    display: block;
    border: 2px solid transparent;
    border-top-color: #8a8a8a;
    border-bottom: 0;
}

.caret.white::after {
    border-top-color: #eee;
}

.caret.bar::after {
    width: 5px;
    height: 5px;
    border: 0;
    border-top: 1px solid #eee;
    background: linear-gradient(#eee, #eee) center 2px / 3px 1px no-repeat;
}

.caret.menu::after {
    border-width: 4px;
    border-bottom: 0;
    border-top-color: #d0d0d0;
}

/* Title bar */
.titlebar {
    display: grid;
    grid-template-columns: 1fr auto 1fr;
    flex: none;
    height: 25px;
    padding-left: 3px;
    background-color: #090909;
    color: #aaa;
}

.titlebar h1 {
    padding: 5px 0 0 37px;
}

.quick {
    display: flex;
    align-items: center;
    height: 20px;
}

.quick .caret {
    width: 15px;
}

.window-buttons {
    display: flex;
    justify-content: flex-end;
    gap: 21px;
    height: 16px;
    padding-right: 3px;
}

/* Ribbon tabs */
.tabs {
    display: flex;
    flex: none;
    height: 25px;
    background-color: #090909;
}

.tabs a {
    height: 23px;
    margin-top: 2px;
    padding: 4px 12px 0;
    color: #b4b4b4;
    text-decoration: none;
}

.tabs .file {
    padding-left: 9px;
    padding-right: 16px;
    color: #eee;
}

.tabs .active {
    background-color: #363636;
    color: #eee;
}

.account {
    display: flex;
    align-items: center;
    height: 24px;
    margin-left: auto;
}

.account > svg {
    margin-top: 6px;
}

.account button:last-child {
    margin-right: -3px;
}

.account .caret {
    width: 16px;
}

/* Ribbon */
.ribbon {
    display: flex;
    flex: none;
    height: 83px;
    border-top: 1px solid #4a4a4a;
    border-bottom: 1px solid #484848;
}

.group {
    display: flex;
    flex-direction: column;
    margin: 2px 0 3px;
    padding: 1px 4px 0;
    border-right: 1px solid #484848;
}

.group:first-child {
    padding-left: 0;
    padding-right: 5px;
}

.group h2 {
    padding-top: 2px;
    text-align: center;
}

.tools {
    display: flex;
    height: 58px;
}

.big-button {
    flex-direction: column;
    justify-content: flex-start;
    padding-top: 4px;
}

.big-button svg {
    width: 24px;
    height: 24px;
    margin-bottom: 2px;
    overflow: visible;
}

.big-button .caret {
    margin-top: 4px;
}

.selected {
    background-color: #585858;
    height: 59px;
}

.w33 { width: 33px; }
.w35 { width: 35px; }
.w37 { width: 37px; }
.w38 { width: 38px; }
.w40 { width: 40px; }
.w44 { width: 44px; }
.w46 { width: 46px; }
.w48 { width: 48px; }

.stack {
    display: flex;
    flex-direction: column;
    align-items: center;
    gap: 5px;
    width: 21px;
    padding-top: 3px;
}

.stack svg,
.modes svg,
.page-buttons svg {
    width: 13px;
    height: 13px;
}

.divider {
    width: 1px;
    margin: 4px 3px 2px;
    background-color: #484848;
}

.modes {
    display: flex;
    flex-direction: column;
    gap: 5px;
    width: 83px;
    padding: 2px 0 0 3px;
}

.modes > button {
    justify-content: flex-start;
    gap: 3px;
    height: 14px;
}

.modes .flips {
    display: flex;
    gap: 5px;
}

.modes .flips svg {
    width: 14px;
    height: 12px;
}

.pages-tools {
    flex-direction: column;
    align-items: center;
    padding-top: 7px;
}

.select-box {
    display: flex;
    align-items: center;
    width: 57px;
    height: 18px;
    border: 1px solid #5a5a5a;
    background-color: #3c3c3c;
}

.select-box select {
    flex: 1;
    min-width: 0;
    padding: 0 1px;
    border: 0;
    appearance: none;
    background: none;
    color: inherit;
    font: inherit;
}

.select-box .caret {
    margin-right: 4px;
}

.page-buttons {
    display: flex;
    gap: 7px;
    padding-top: 9px;
}

.icon-grid {
    display: grid;
    grid-template-columns: repeat(3, 19px);
    grid-auto-rows: 24px;
    padding: 5px 0 0 2px;
}

.icon-grid svg {
    width: 14px;
    height: 14px;
}

/* Docked panels */
main {
    display: flex;
    flex: 1;
    min-height: 0;
}

.left-dock {
    display: flex;
    flex-direction: column;
    flex: none;
    width: 182px;
}

.dock-panel {
    display: flex;
    flex-direction: column;
}

.pages {
    flex: 0 1 255px;
}

.bookmarks {
    flex: 1;
    margin-top: 5px;
    min-height: 0;
}

.panel-title {
    display: flex;
    align-items: center;
    flex: none;
    height: 22px;
    padding: 0 5px 2px 0;
}

.panel-title h3 {
    margin-right: auto;
}

.panel-title button {
    width: 9px;
    height: 9px;
    margin-left: 6px;
}

.panel-title svg,
.doc-tab svg {
    width: 8px;
    height: 8px;
}

.left-dock h3 {
    margin-left: -3px;
}

.toolbar {
    display: flex;
    align-items: center;
    flex: none;
    height: 20px;
    background-color: #2e2e2e;
}

.toolbar button {
    width: 18px;
    height: 17px;
}

.toolbar .on {
    background-color: #161616;
}

.toolbar svg {
    width: 13px;
    height: 13px;
}

.toolbar i {
    width: 1px;
    height: 16px;
    margin: 0 3px;
    background-color: #404040;
}

.left-dock .toolbar i {
    margin: 0 2px 0 3px;
}

.panel-body {
    flex: 1;
    min-height: 0;
    border: 1px solid #858585;
    border-left: 0;
    background-color: #2f2f2f;
}

.bookmarks .panel-body {
    border-bottom: 0;
}

.thumbs {
    padding: 2px 0 0 11px;
}

figure {
    width: 96px;
    text-align: center;
}

.thumb {
    display: flex;
    align-items: center;
    height: 72px;
    margin-bottom: 3px;
    background-color: #fff;
    --ink: 10;
}

.thumb svg {
    width: 100%;
}

.bookmark-table,
.element-table {
    width: 100%;
    border-collapse: collapse;
    table-layout: fixed;
}

.bookmark-table th,
.bookmark-table td {
    height: 19px;
    padding: 0 3px;
    font-weight: normal;
    text-align: left;
}

.bookmark-table th {
    background-color: #262626;
    border-right: 1px solid #444;
}

.bookmark-table th:first-child {
    width: 91px;
}

.bookmark-table th:nth-child(2) {
    width: 41px;
}

.bookmark-table th:last-child {
    border-right: 0;
}

.bookmark-table tr > :first-child {
    padding: 0;
    text-indent: -2px;
}

.bookmark-table td:nth-child(2) {
    padding-left: 5px;
}

/* Document area */
.center {
    display: flex;
    flex-direction: column;
    flex: 1;
    min-width: 0;
    margin-left: 5px;
}

.doc-tabs {
    display: flex;
    flex: none;
    height: 20px;
    border-bottom: 1px solid #484848;
}

.scroll {
    width: 12px;
}

.scroll.right {
    width: 20px;
    margin-left: auto;
}

.doc-tab {
    display: flex;
    align-items: center;
    gap: 9px;
    height: 17px;
    margin-top: 2px;
    padding: 0 5px 1px 31px;
    background-color: #505050;
    clip-path: polygon(18px 0, 100% 0, 100% 100%, 0 100%);
    color: #f0f0f0;
    font-weight: bold;
}

.canvas {
    display: flex;
    flex: 1;
    align-items: center;
    justify-content: center;
    min-height: 0;
    margin: 2px 4px 0;
    border: 2px solid #b4b4b4;
    border-color: #888 #d0d0d0 #d0d0d0 #888;
    background-color: #343434;
}

.sheet {
    height: 98%;
    max-width: 98%;
    box-shadow: 4px 4px #000;
}

.ink {
    fill: none;
    stroke: #111;
    stroke-width: var(--ink, 3);
}

.ink g[fill="#fff"] {
    fill: #fff;
}

.sheet-text {
    fill: #333;
    font-family: "Liberation Sans", Arial, sans-serif;
    font-size: 15px;
}

.sheet-text .big {
    font-size: 27px;
}

.centered {
    text-anchor: middle;
}

/* Markup elements */
.elements {
    flex: none;
    height: 74px;
    border-top: 9px solid #454545;
}

.elements .panel-title {
    padding-left: 3px;
}

.elements .toolbar {
    padding-left: 7px;
}

.element-table {
    border-top: 1px solid #4c4c4c;
    font-family: "Liberation Serif", serif;
}

.element-table th {
    height: 19px;
    padding: 0 0 0 4px;
    border-right: 1px solid #4a4a4a;
    font-weight: normal;
    text-align: left;
}

.element-table th:first-child {
    padding-left: 19px;
}

.element-table th:last-child {
    padding-left: 2px;
    border-right: 0;
}

.c49 { width: 49px; }
.c65 { width: 65px; }
.c81 { width: 81px; }
.c96 { width: 96px; }

/* Project panel */
.right-dock {
    display: flex;
    flex-direction: column;
    flex: none;
    width: 149px;
    margin-left: 5px;
}

.right-dock .panel-title {
    margin-right: -3px;
    padding: 0 0 2px 3px;
}

.right-dock .toolbar {
    padding-left: 8px;
}

.tree {
    flex: 1;
    padding: 1px 5px;
    border: solid #858585;
    border-width: 1px 0 0 1px;
    background-color: #2f2f2f;
}

.tree li {
    display: flex;
    flex-wrap: wrap;
    align-items: center;
    gap: 2px 4px;
    height: 14px;
    color: #dcdcdc;
}

.tree ul {
    flex: 0 0 100%;
    padding: 0 0 0 20px;
}

.tree ul li {
    gap: 3px;
}

/* dotted branch line */
.tree ul li::before {
    content: "";
    width: 7px;
    height: 9px;
    margin-bottom: 8px;
    border: dotted #666;
    border-width: 0 0 1px 1px;
}

.tree svg {
    width: 12px;
    height: 12px;
}

.toggle {
    width: 8px;
    height: 8px;
    margin-right: 2px;
    background-color: #ddd;
    color: #111;
}
```
